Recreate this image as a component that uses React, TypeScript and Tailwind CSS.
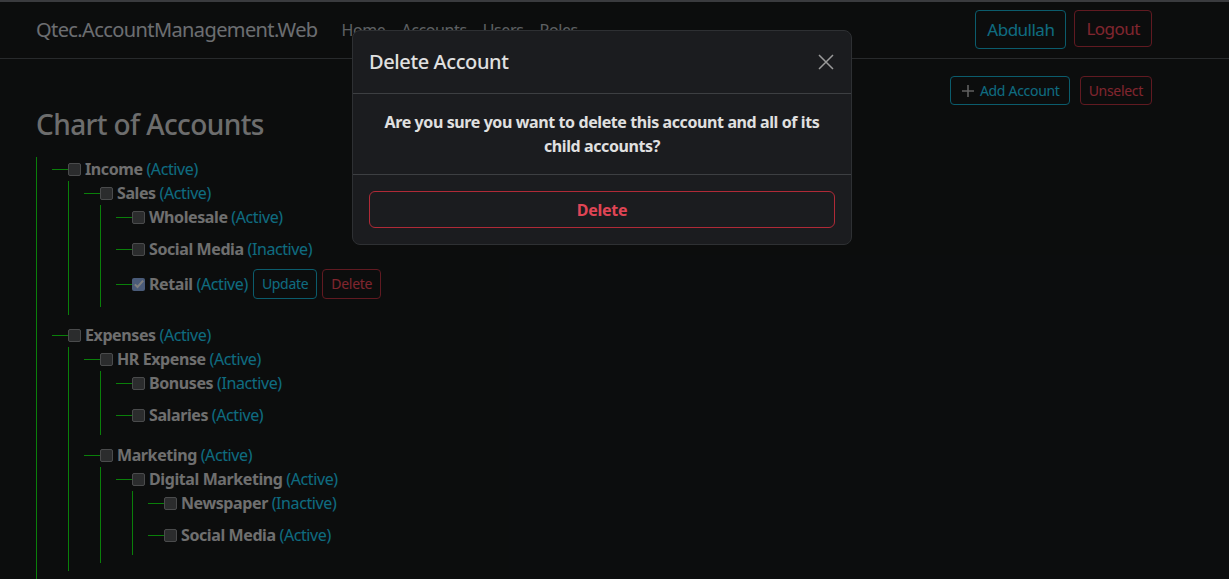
import React from "react";

type Account = {
  name: string;
  active: boolean;
  checked?: boolean;
  children?: Account[];
};

const accounts: Account[] = [
  {
    name: "Income",
    active: true,
    children: [
      {
        name: "Sales",
        active: true,
        children: [
          { name: "Wholesale", active: true },
          { name: "Social Media", active: false },
          { name: "Retail", active: true, checked: true },
        ],
      },
    ],
  },
  {
    name: "Expenses",
    active: true,
    children: [
      {
        name: "HR Expense",
        active: true,
        children: [
          { name: "Bonuses", active: false },
          { name: "Salaries", active: true },
        ],
      },
      {
        name: "Marketing",
        active: true,
        children: [
          {
            name: "Digital Marketing",
            active: true,
            children: [
              { name: "Newspaper", active: false },
              { name: "Social Media", active: true },
            ],
          },
        ],
      },
    ],
  },
];

const font = { fontFamily: '"Noto Sans", "Open Sans", sans-serif' };

function Checkbox({ checked }: { checked?: boolean }) {
  if (checked) {
    return (
      <span className="flex h-[13px] w-[13px] shrink-0 items-center justify-center rounded-[2px] bg-[#94b6f2]">
        <svg width="12" height="12" viewBox="0 0 16 16">
          <path d="M2.5 8.5l3.5 3.5L13.5 3.5" fill="none" stroke="#ffffff" strokeWidth="2.8" />
        </svg>
      </span>
    );
  }
  return (
    <span className="h-[13px] w-[13px] shrink-0 rounded-[2px] border border-[#959799] bg-[#56585b]" />
  );
}

function AccountItem({ account }: { account: Account }) {
  const hasChildren = !!account.children?.length;
  return (
    <li className="pb-2 pl-[15px]">
      <div className={`flex items-center ${account.checked ? "h-[30px]" : "h-6"}`}>
        <span className="h-px w-4 shrink-0 bg-[#14ff14]" />
        <Checkbox checked={account.checked} />
        <span className="ml-1 whitespace-nowrap text-base leading-6 tracking-[-0.4px]">
          <b className="font-bold text-[#dedede]">{account.name}</b>{" "}
          <span className="text-[#1ed8ff]">({account.active ? "Active" : "Inactive"})</span>
        </span>
        {account.checked && (
          <>
            <button className="ml-[5px] h-[30px] rounded border border-[#17b8d8] px-2 text-sm tracking-[-0.3px] text-[#1ed8ff]">
              Update
            </button>
            <button className="ml-[5px] h-[30px] rounded border border-[#c23442] px-2 text-sm tracking-[-0.3px] text-[#ff4c5e]">
              Delete
            </button>
          </>
        )}
      </div>
      {hasChildren && (
        <div className="ml-4">
          <AccountTree accounts={account.children!} />
        </div>
      )}
    </li>
  );
}

function AccountTree({ accounts }: { accounts: Account[] }) {
  return (
    <ul className="border-l border-[#14ff14]">
      {accounts.map((a, i) => (
        <AccountItem key={a.name + i} account={a} />
      ))}
    </ul>
  );
}

export default function App() {
  return (
    <div className="relative h-[579px] overflow-hidden bg-[#181a1b]" style={font}>
      <div className="h-[2px] bg-[#75767c]" />
      <nav className="flex h-[57px] border-b border-[#505458] pl-[36px] pr-[77px]">
        <div className="flex items-center">
          <span className="mr-4 text-[20px] tracking-[-0.6px] text-[#d9dde1]">
            Qtec.AccountManagement.Web
          </span>
          <div className="flex text-base tracking-[-0.4px] text-[#bcc1c6]">
            <a className="px-2">Home</a>
            <a className="px-2">Accounts</a>
            <a className="px-2">Users</a>
            <a className="px-2">Roles</a>
          </div>
        </div>
        <div className="ml-auto flex items-start gap-2 pt-2">
          <button className="h-[39px] rounded border border-[#17b8d8] px-[11px] text-[17px] tracking-[-0.5px] text-[#1ed8ff]">
            Abdullah
          </button>
          <button className="h-[37px] rounded border border-[#c23442] px-[11px] text-[17px] tracking-[-0.5px] text-[#ff4c5e]">
            Logout
          </button>
        </div>
      </nav>

      <main className="pl-[36px] pr-[77px]">
        <div className="mt-[17px] flex justify-end gap-[10px] tracking-[-0.3px]">
          <button className="flex h-[29px] items-center rounded border border-[#17b8d8] px-[9px] text-sm text-[#1ed8ff]">
            <svg width="16" height="16" viewBox="0 0 16 16" className="mr-1">
              <path d="M8 2v12M2 8h12" stroke="#c0c0c0" strokeWidth="1.6" />
            </svg>
            Add Account
          </button>
          <button className="h-[29px] rounded border border-[#c23442] px-2 text-sm text-[#ff4c5e]">
            Unselect
          </button>
        </div>
        <h2 className="mt-[2px] mb-[16px] text-[28px] font-medium leading-[34px] tracking-[-0.6px] text-[#dadada]">
          Chart of Accounts
        </h2>
        <AccountTree accounts={accounts} />
      </main>

      <div className="absolute inset-0 bg-black/50" />

      <div className="absolute left-[352px] top-[30px] w-[500px] rounded-lg border border-[#2e3033] bg-[#1b1c1f]">
        <div className="flex items-center justify-between border-b border-[#3d3f42] p-4">
          <h5 className="text-[20px] font-medium leading-[30px] tracking-[-0.4px] text-[#e0e0e0]">
            Delete Account
          </h5>
          <svg width="16" height="16" viewBox="0 0 16 16" className="mr-[1px]">
            <path d="M1 1l14 14M15 1L1 15" stroke="#9a9a9a" strokeWidth="1.5" />
          </svg>
        </div>
        <div className="border-b border-[#3d3f42] p-4 text-center text-base font-bold leading-6 tracking-[-0.4px] text-[#e0e0e0]">
          Are you sure you want to delete this account and all of its child accounts?
        </div>
        <div className="p-4">
          <button className="h-[37px] w-full rounded-md border border-[#b02a37] text-base font-bold tracking-[-0.3px] text-[#e04555]">
            Delete
          </button>
        </div>
      </div>
    </div>
  );
}
